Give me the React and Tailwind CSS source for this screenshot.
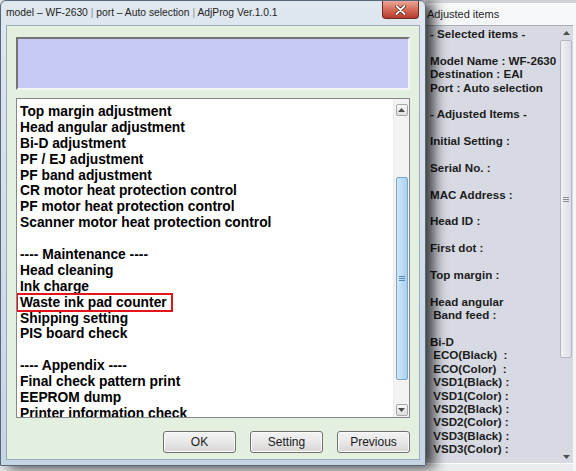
const listItems = [
  'Top margin adjustment',
  'Head angular adjustment',
  'Bi-D adjustment',
  'PF / EJ adjustment',
  'PF band adjustment',
  'CR motor heat protection control',
  'PF motor heat protection control',
  'Scanner motor heat protection control',
  '',
  '---- Maintenance ----',
  'Head cleaning',
  'Ink charge',
  'Waste ink pad counter',
  'Shipping setting',
  'PIS board check',
  '',
  '---- Appendix ----',
  'Final check pattern print',
  'EEPROM dump',
  'Printer information check',
];

const sideLines = [
  '- Selected items -',
  '',
  'Model Name : WF-2630',
  'Destination : EAI',
  'Port : Auto selection',
  '',
  '- Adjusted Items -',
  '',
  'Initial Setting :',
  '',
  'Serial No. :',
  '',
  'MAC Address :',
  '',
  'Head ID :',
  '',
  'First dot :',
  '',
  'Top margin :',
  '',
  'Head angular',
  ' Band feed :',
  '',
  'Bi-D',
  ' ECO(Black)  :',
  ' ECO(Color)  :',
  ' VSD1(Black) :',
  ' VSD1(Color) :',
  ' VSD2(Black) :',
  ' VSD2(Color) :',
  ' VSD3(Black) :',
  ' VSD3(Color) :',
];

const font = { fontFamily: '"Liberation Sans", Arial, sans-serif' };

const Arrow = ({ down }) => (
  <svg width="7" height="4" viewBox="0 0 7 4" className={down ? 'rotate-180' : ''}>
    <path d="M0 4 L3.5 0 L7 4 Z" fill="#4d4d4d" />
  </svg>
);

const WinButton = ({ children }) => (
  <button className="w-[73px] h-[22px] rounded-[3px] border border-[#707070] bg-gradient-to-b from-[#f3f3f3] via-[#e8e8e8] to-[#d6d6d6] text-[12px] text-[#1a1a1a] shadow-[inset_0_0_0_1px_#fcfcfc]">
    {children}
  </button>
);

const App = () => {
  return (
    <div className="w-[576px] h-[471px] relative overflow-hidden flex bg-[#e9ebee]" style={font}>
      {/* Main dialog */}
      <div className="w-[426px] h-[466px] shrink-0 relative z-10 flex flex-col rounded-t-[6px] border border-[#56677a] bg-gradient-to-b from-[#dfe7ef] via-[#d3deea] to-[#c6d5e4] shadow-[8px_2px_14px_rgba(0,0,0,0.75)]">
        <div className="h-[24px] flex items-start justify-between pl-[5px]">
          <span className="leading-[24px] text-[10.3px] text-[#1e1e1e] whitespace-nowrap">
            model – WF-2630 <span className="text-[#8a8a8a]">|</span> port – Auto selection <span className="text-[#8a8a8a]">|</span> AdjProg Ver.1.0.1
          </span>
          <button className="mr-[6px] w-[37px] h-[18px] flex items-center justify-center rounded-b-[4px] border border-t-0 border-[#6e2a22] bg-gradient-to-b from-[#eaa899] via-[#d56c58] to-[#b63a2b]">
            <svg width="11" height="10" viewBox="0 0 11 10">
              <path d="M1.5 1 L9.5 9 M9.5 1 L1.5 9" stroke="#5a1a14" strokeWidth="3.4" strokeLinecap="round" />
              <path d="M1.5 1 L9.5 9 M9.5 1 L1.5 9" stroke="#ffffff" strokeWidth="1.8" strokeLinecap="round" />
            </svg>
          </button>
        </div>

        <div className="flex-1 mx-[5px] mb-[5px] border border-[#9aabbd] bg-[#e3f0e0] px-[9px] pt-[11px] flex flex-col">
          <div className="h-[53px] bg-[#c6cbf6] border-2 border-t-[#737373] border-l-[#737373] border-b-[#f4f4f4] border-r-[#f4f4f4]" />

          <div className="mt-[8px] h-[320px] flex border border-[#828790] bg-white">
            <div className="flex-1 overflow-hidden pl-[3px] pt-[5px]">
              {listItems.map((t, i) => (
                <div key={i} className="relative h-[15.9px] leading-[15.9px] text-[13.8px] font-bold text-black whitespace-nowrap">
                  {t}
                  {t === 'Waste ink pad counter' && (
                    <span className="absolute -left-[4px] -top-[2px] w-[157px] h-[19px] border-2 border-[#e3151a]" />
                  )}
                </div>
              ))}
            </div>
            <div className="w-[16px] flex flex-col items-center pt-[5px] bg-[#f3f3f3] border-l border-[#ececec]">
              <div className="w-[12px] h-[12px] flex items-center justify-center rounded-[2px] border border-[#a8a8a8] bg-gradient-to-b from-[#fafafa] to-[#dedede]">
                <Arrow />
              </div>
              <div className="mt-[61px] w-[12px] h-[203px] flex flex-col items-center justify-center gap-[1px] rounded-[2px] border border-[#7aa6cb] bg-gradient-to-r from-[#cfe7f9] via-[#bcdcf4] to-[#a9cfee]">
                <span className="w-[6px] h-px bg-[#5c88ad]" />
                <span className="w-[6px] h-px bg-[#5c88ad]" />
                <span className="w-[6px] h-px bg-[#5c88ad]" />
              </div>
              <div className="mt-auto mb-[1px] w-[12px] h-[12px] flex items-center justify-center rounded-[2px] border border-[#a8a8a8] bg-gradient-to-b from-[#fafafa] to-[#dedede]">
                <Arrow down />
              </div>
            </div>
          </div>

          <div className="mt-[13px] flex justify-end gap-[14px]">
            <WinButton>OK</WinButton>
            <WinButton>Setting</WinButton>
            <WinButton>Previous</WinButton>
          </div>
        </div>
      </div>

      {/* Adjusted items window behind */}
      <div className="flex-1 flex flex-col">
        <div className="h-[3px] bg-[#cfd2d6]" />
        <div className="h-[22px] bg-[#f7f8fa] pl-[1px] leading-[22px] text-[11px] text-[#1e1e1e] whitespace-nowrap">
          Adjusted items
        </div>
        <div className="h-[438px] flex mr-[3px] border-t border-[#a9adb5] bg-[#d7dae3]">
          <div className="flex-1 pl-[4px] pt-[1px] overflow-hidden">
            {sideLines.map((t, i) => (
              <div key={i} className="h-[13.4px] leading-[13.4px] text-[11.6px] font-bold text-[#1c1c1c] whitespace-pre">
                {t}
              </div>
            ))}
          </div>
          <div className="w-[14px] flex flex-col items-center pt-[5px] pb-[4px]">
            <Arrow />
            <div className="mt-[5px] w-[12px] h-[318px] flex flex-col items-center justify-center gap-[1px] rounded-[2px] border border-[#b4b7bf] bg-gradient-to-r from-[#f1f2f5] to-[#dcdee5]">
              <span className="w-[6px] h-px bg-[#8a8d95]" />
              <span className="w-[6px] h-px bg-[#8a8d95]" />
              <span className="w-[6px] h-px bg-[#8a8d95]" />
            </div>
            <div className="mt-auto">
              <Arrow down />
            </div>
          </div>
        </div>
        <div className="h-px bg-white mr-[3px]" />
      </div>
      <div className="absolute right-0 top-[25px] bottom-0 w-[3px] bg-[#f6f6f6]" />
    </div>
  );
};

export default App;
